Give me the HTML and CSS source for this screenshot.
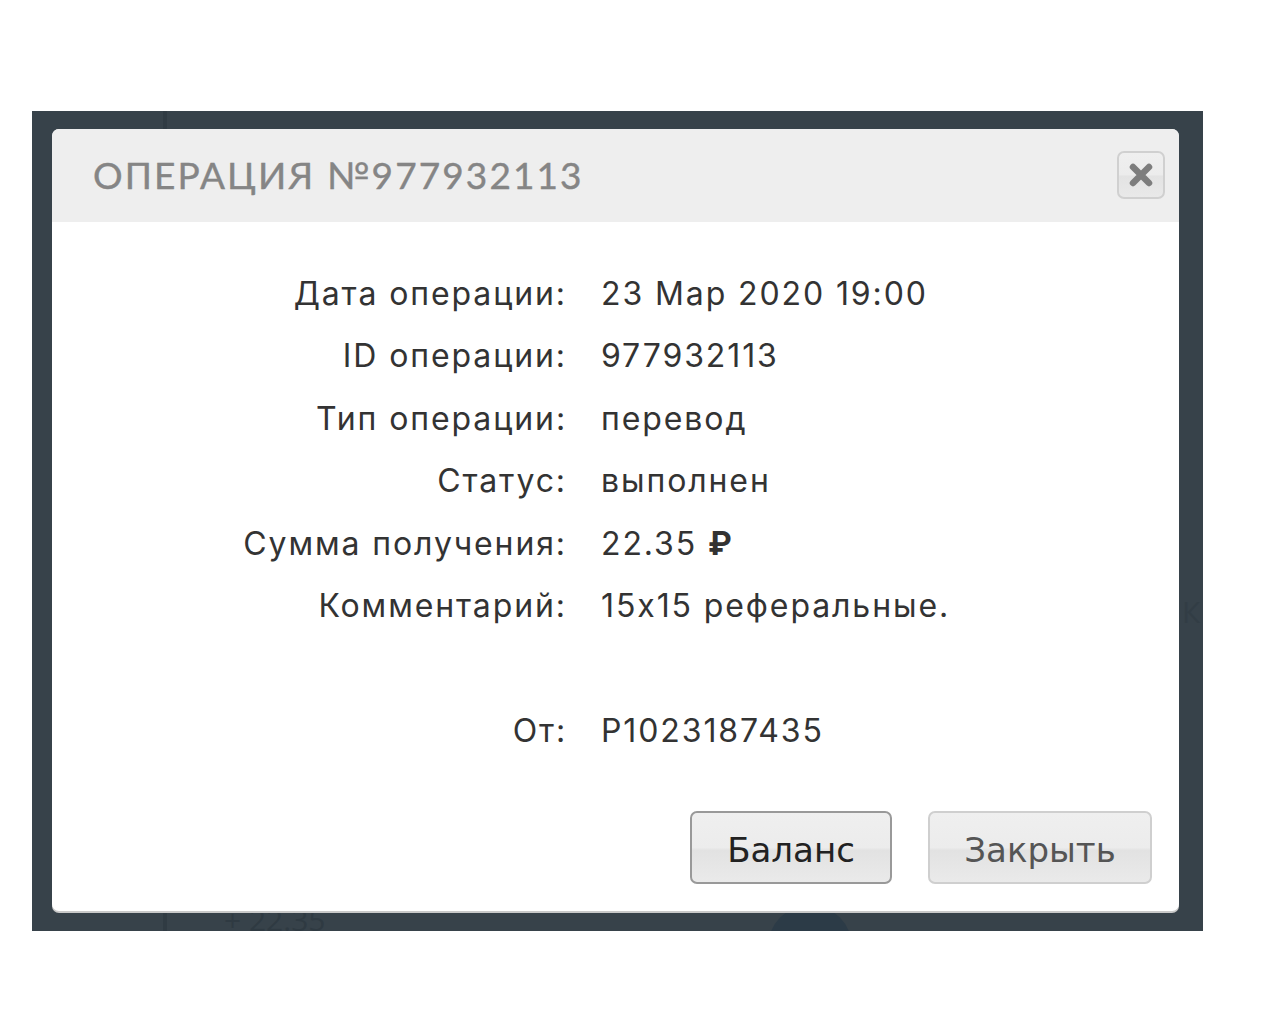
FILE: index.html
```html
<!DOCTYPE html>
<html lang="ru">
<head>
<meta charset="utf-8">
<title>Операция №977932113</title>
<link rel="stylesheet" href="styles.css">
</head>
<body>
<div class="overlay">
  <div class="ghost ghost-line"></div>
  <div class="ghost ghost-amount">+ 22.35</div>
  <div class="ghost ghost-circle"></div>
  <div class="ghost ghost-k">К</div>
  <div class="dialog">
    <div class="dialog-head">
      <h1 class="dialog-title">ОПЕРАЦИЯ №977932113</h1>
      <button class="close-btn" aria-label="Закрыть">
        <svg width="26" height="26" viewBox="0 0 26 26"><path d="M5 5 L21 21 M21 5 L5 21" stroke="#7d7d7d" stroke-width="6.5" stroke-linecap="round"/></svg>
      </button>
    </div>
    <div class="dialog-body">
      <div class="details">
        <div class="label">Дата операции:</div><div class="value">23 Мар 2020 19:00</div>
        <div class="label">ID операции:</div><div class="value">977932113</div>
        <div class="label">Тип операции:</div><div class="value">перевод</div>
        <div class="label">Статус:</div><div class="value">выполнен</div>
        <div class="label">Сумма получения:</div><div class="value">22.35 <b class="rub">₽</b></div>
        <div class="label">Комментарий:</div><div class="value">15x15 реферальные.</div>
        <div class="label"></div><div class="value"></div>
        <div class="label">От:</div><div class="value">P1023187435</div>
      </div>
      <div class="actions">
        <button class="btn btn-primary">Баланс</button>
        <button class="btn">Закрыть</button>
      </div>
    </div>
  </div>
</div>
</body>
</html>
```
FILE: styles.css
```css
html, body {
  margin: 0;
  padding: 0;
  background: #ffffff;
}
body {
  padding-top: 111px;
  padding-left: 32px;
}
.overlay {
  position: relative;
  width: 1171px;
  height: 820px;
  box-sizing: border-box;
  padding: 18px 24px 0 20px;
  background: #37424a;
}
.ghost {
  position: absolute;
}
.ghost-line {
  left: 131px;
  top: 0;
  width: 4px;
  height: 820px;
  background: #303b43;
}
.ghost-amount {
  left: 192px;
  top: 788px;
  font: 30px "Open Sans", sans-serif;
  color: #2f3a42;
}
.ghost-circle {
  left: 736px;
  top: 794px;
  width: 84px;
  height: 84px;
  border-radius: 50%;
  background: #2c3b47;
}
.ghost-k {
  left: 1150px;
  top: 480px;
  font: 30px "Open Sans", sans-serif;
  color: #323d45;
}
.dialog {
  position: relative;
  width: 1127px;
  height: 782px;
  background: #ffffff;
  border-radius: 7px;
  box-shadow: 0 2px 0 #c9c9c9;
  display: flex;
  flex-direction: column;
  overflow: hidden;
}
.dialog-head {
  height: 93px;
  background: #eeeeee;
  display: flex;
  align-items: center;
  justify-content: space-between;
  padding: 0 14px 0 41px;
  flex-shrink: 0;
}
.dialog-title {
  margin: 0;
  font-family: "Lato", "DejaVu Sans", sans-serif;
  font-weight: 400;
  font-size: 37px;
  letter-spacing: 2.1px;
  color: #858585;
  margin-top: -2px;
  -webkit-text-stroke: 0.4px #858585;
}
.close-btn {
  width: 48px;
  height: 48px;
  border: 2px solid #d0d0d0;
  border-radius: 7px;
  background: linear-gradient(#efefef 0%, #ececec 50%, #e3e3e3 52%, #e9e9e9 100%);
  display: flex;
  align-items: center;
  justify-content: center;
  padding: 0;
  margin-top: -2px;
}
.dialog-body {
  flex: 1;
  display: flex;
  flex-direction: column;
  padding: 40px 27px 27px 0;
}
.details {
  display: grid;
  grid-template-columns: 515px 1fr;
  column-gap: 34px;
  grid-auto-rows: 62.5px;
  font-family: "Inter", "Open Sans", sans-serif;
  font-feature-settings: "calt" 0;
  font-size: 32px;
  letter-spacing: 1.9px;
  color: #333333;
  align-items: center;
}
.label {
  text-align: right;
}
.rub {
  font-weight: 700;
}
.actions {
  margin-top: auto;
  display: flex;
  justify-content: flex-end;
  gap: 36px;
}
.btn {
  height: 73px;
  border: 2px solid #cfcfcf;
  border-radius: 7px;
  background: linear-gradient(#efefef 0%, #ececec 50%, #e2e2e2 54%, #eaeaea 100%);
  font-family: "DejaVu Sans", "Liberation Sans", sans-serif;
  font-size: 34px;
  color: #555555;
  padding: 4px 0 0 0;
  width: 224px;
}
.btn-primary {
  width: 202px;
  border-color: #999999;
  color: #222222;
}
```
